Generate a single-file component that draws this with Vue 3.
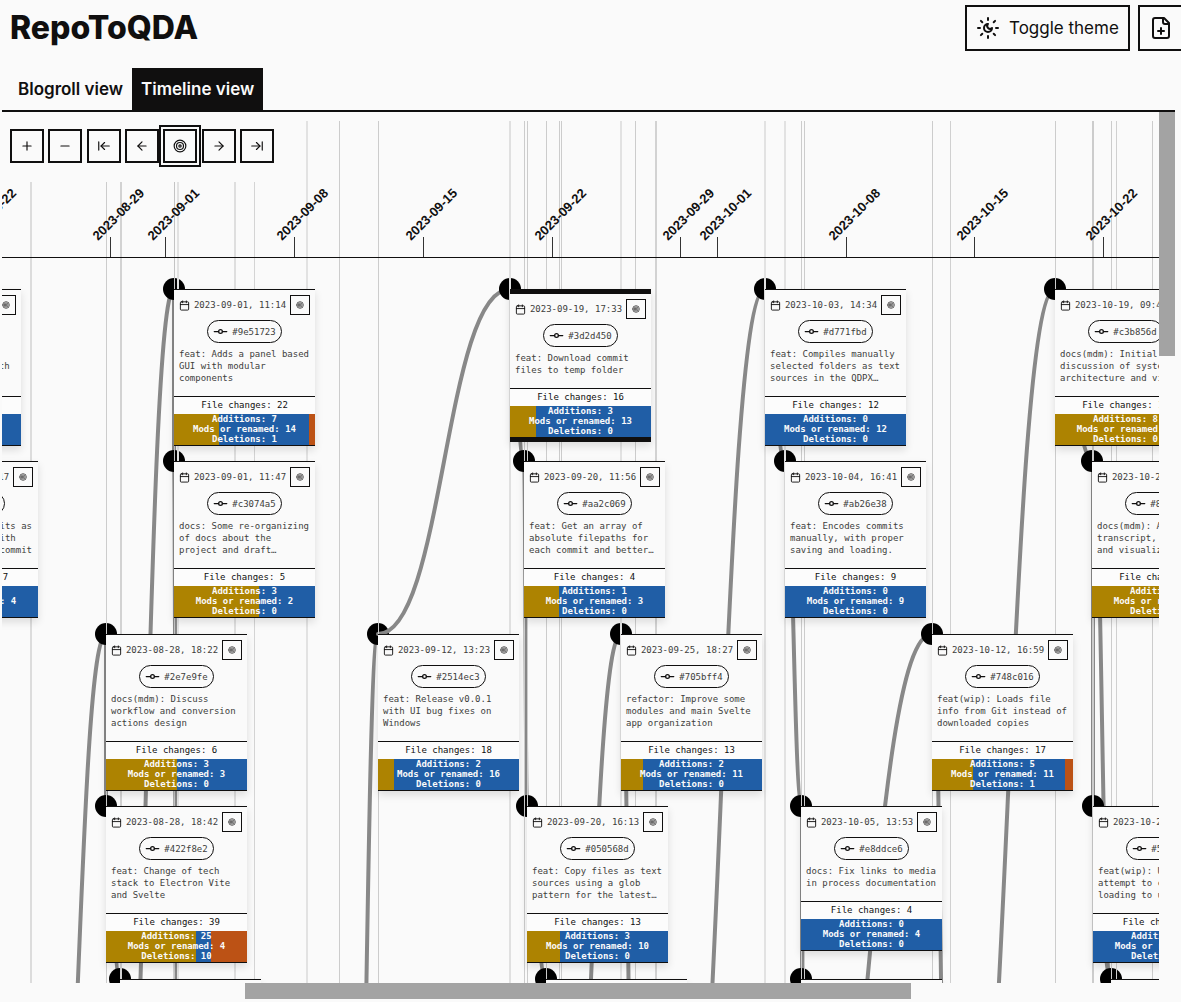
<script setup>
import { ref } from 'vue'

const icons = {
  plus: ['M5 12h14', 'M12 5v14'],
  minus: ['M5 12h14'],
  first: ['M3 19V5', 'm13 6-6 6 6 6', 'M7 12h14'],
  prev: ['m12 19-7-7 7-7', 'M19 12H5'],
  target: [
    'M2 12a10 10 0 1 0 20 0a10 10 0 1 0-20 0',
    'M6 12a6 6 0 1 0 12 0a6 6 0 1 0-12 0',
    'M10 12a2 2 0 1 0 4 0a2 2 0 1 0-4 0',
  ],
  next: ['M5 12h14', 'm12 5 7 7-7 7'],
  last: ['M17 12H3', 'm11 18 6-6-6-6', 'M21 5v14'],
}

const tools = [
  { icon: 'plus', label: 'Zoom in' },
  { icon: 'minus', label: 'Zoom out' },
  { icon: 'first', label: 'First commit' },
  { icon: 'prev', label: 'Previous commit' },
  { icon: 'target', label: 'Centre on commit' },
  { icon: 'next', label: 'Next commit' },
  { icon: 'last', label: 'Last commit' },
]

const view = ref('timeline')
const focused = ref('target')

const ticks = [
  [-18, '2023-08-22'], [110, '2023-08-29'], [165, '2023-09-01'], [294, '2023-09-08'],
  [423, '2023-09-15'], [552, '2023-09-22'], [680, '2023-09-29'], [717, '2023-10-01'],
  [846, '2023-10-08'], [974, '2023-10-15'], [1103, '2023-10-22'],
]

// [x, width, shade]
const guides = [
  [30, 2, '#dcdcdc'], [106, 1, '#cccccc'], [120, 2, '#d2d2d2'], [174, 1, '#c4c4c4'],
  [177, 2, '#e2e2e2'], [234, 2, '#dedede'], [254, 1, '#d4d4d4'], [306, 2, '#e2e2e2'],
  [339, 1, '#cccccc'], [378, 1, '#cccccc'], [509, 2, '#e0e0e0'], [524, 1, '#cccccc'],
  [527, 1, '#cccccc'], [546, 1, '#cccccc'], [559, 1, '#cccccc'], [561, 1, '#cccccc'],
  [620, 2, '#e2e2e2'], [635, 1, '#cccccc'], [655, 2, '#d2d2d2'], [764, 2, '#e2e2e2'],
  [784, 2, '#e2e2e2'], [801, 1, '#cccccc'], [804, 1, '#cccccc'], [932, 1, '#cccccc'],
  [950, 1, '#d0d0d0'], [1055, 1, '#cccccc'], [1092, 2, '#cccccc'], [1111, 1, '#cccccc'],
  [1116, 1, '#d0d0d0'], [1152, 1, '#cccccc'],
]

// [x1, y1, x2, y2]
const links = [
  [174, 289, 117, 1324], [106, 634, 50, 1324], [378, 634, 355, 1324],
  [765, 289, 676, 1324], [1055, 289, 960, 1324], [932, 634, 803, 1324],
  [621, 634, 561, 1324], [510, 289, 524, 461], [524, 461, 527, 806],
  [765, 289, 785, 461], [785, 461, 802, 806], [1055, 289, 1093, 461],
  [1093, 461, 1111, 979], [1093, 461, 1093, 806], [1093, 806, 1111, 979],
  [932, 634, 950, 1324], [621, 634, 636, 1324], [174, 289, 174, 461],
  [174, 461, 177, 1324], [106, 634, 106, 806], [106, 806, 120, 979],
  [527, 806, 546, 979], [802, 806, 802, 979],
]
const mergeLink = [510, 289, 378, 634]

function curve([x1, y1, x2, y2]) {
  const m = (x1 + x2) / 2
  return `M${x1} ${y1}C${m} ${y1} ${m} ${y2} ${x2} ${y2}`
}

const commits = [
  { x: -120, y: 289, date: '2023-08-17, 10:02', hash: '7bd10f4', msg: 'feat: Keeps the panel\nviews synchronized with\nthe repo', c: [0, 4, 0] },
  { x: -103, y: 461, date: '2023-08-18, 12:17', hash: 'b41d9e0', msg: 'feat: Exports commits as\ntext files along with\nthe metadata from commit', c: [3, 4, 0] },
  { x: 106, y: 634, date: '2023-08-28, 18:22', hash: '2e7e9fe', msg: 'docs(mdm): Discuss\nworkflow and conversion\nactions design', c: [3, 3, 0] },
  { x: 106, y: 806, date: '2023-08-28, 18:42', hash: '422f8e2', msg: 'feat: Change of tech\nstack to Electron Vite\nand Svelte', c: [25, 4, 10] },
  { x: 120, y: 979, date: '2023-08-29, 13:05', hash: '91c5a7d', msg: 'feat: Adds base layout', c: [2, 3, 0] },
  { x: 174, y: 289, date: '2023-09-01, 11:14', hash: '9e51723', msg: 'feat: Adds a panel based\nGUI with modular\ncomponents', c: [7, 14, 1] },
  { x: 174, y: 461, date: '2023-09-01, 11:47', hash: 'c3074a5', msg: 'docs: Some re-organizing\nof docs about the\nproject and draft…', c: [3, 2, 0] },
  { x: 378, y: 634, date: '2023-09-12, 13:23', hash: '2514ec3', msg: 'feat: Release v0.0.1\nwith UI bug fixes on\nWindows', c: [2, 16, 0] },
  { x: 510, y: 289, date: '2023-09-19, 17:33', hash: '3d2d450', msg: 'feat: Download commit\nfiles to temp folder', c: [3, 13, 0], active: true },
  { x: 524, y: 461, date: '2023-09-20, 11:56', hash: 'aa2c069', msg: 'feat: Get an array of\nabsolute filepaths for\neach commit and better…', c: [1, 3, 0] },
  { x: 527, y: 806, date: '2023-09-20, 16:13', hash: '050568d', msg: 'feat: Copy files as text\nsources using a glob\npattern for the latest…', c: [3, 10, 0] },
  { x: 546, y: 979, date: '2023-09-21, 17:40', hash: 'd02b6c8', msg: 'feat: Adds sources', c: [1, 4, 0] },
  { x: 621, y: 634, date: '2023-09-25, 18:27', hash: '705bff4', msg: 'refactor: Improve some\nmodules and main Svelte\napp organization', c: [2, 11, 0] },
  { x: 765, y: 289, date: '2023-10-03, 14:34', hash: 'd771fbd', msg: 'feat: Compiles manually\nselected folders as text\nsources in the QDPX…', c: [0, 12, 0] },
  { x: 785, y: 461, date: '2023-10-04, 16:41', hash: 'ab26e38', msg: 'feat: Encodes commits\nmanually, with proper\nsaving and loading.', c: [0, 9, 0] },
  { x: 801, y: 806, date: '2023-10-05, 13:53', hash: 'e8ddce6', msg: 'docs: Fix links to media\nin process documentation', c: [0, 4, 0] },
  { x: 801, y: 979, date: '2023-10-05, 16:20', hash: '6af03d1', msg: 'docs: Update readme', c: [0, 1, 0] },
  { x: 932, y: 634, date: '2023-10-12, 16:59', hash: '748c016', msg: 'feat(wip): Loads file\ninfo from Git instead of\ndownloaded copies', c: [5, 11, 1] },
  { x: 1055, y: 289, date: '2023-10-19, 09:45', hash: 'c3b856d', msg: 'docs(mdm): Initial\ndiscussion of system\narchitecture and views', c: [8, 2, 0] },
  { x: 1092, y: 461, date: '2023-10-21, 12:10', hash: '8e4b11a', msg: 'docs(mdm): Adds\ntranscript, codes\nand visualizations', c: [8, 4, 0] },
  { x: 1093, y: 806, date: '2023-10-21, 17:32', hash: '5f1d0c9', msg: 'feat(wip): User\nattempt to copy\nloading to update', c: [0, 9, 0] },
  { x: 1111, y: 979, date: '2023-10-22, 16:12', hash: 'e07c2b3', msg: 'feat: Adds loading', c: [1, 2, 0] },
]

const backNodes = commits.filter((c) => c.hash === '2514ec3')
const nodes = commits.filter((c) => c.hash !== '2514ec3')

const total = (c) => c.c[0] + c.c[1] + c.c[2]
</script>

<template>
  <div class="app">
    <header class="top">
      <h1>RepoToQDA</h1>
      <div class="actions">
        <button class="big" type="button">
          <svg class="i24" viewBox="0 0 24 24">
            <path d="M12 8a2.83 2.83 0 0 0 4 4 4 4 0 1 1-4-4M12 2v2M12 20v2m-7.1-17.1 1.4 1.4M17.7 17.7l1.4 1.4M2 12h2M20 12h2M6.3 17.7l-1.4 1.4M19.1 4.9l-1.4 1.4" />
          </svg>
          Toggle theme
        </button>
        <button class="big" type="button" aria-label="New project">
          <svg class="i24" viewBox="0 0 24 24">
            <path d="M15 2H6a2 2 0 0 0-2 2v16a2 2 0 0 0 2 2h12a2 2 0 0 0 2-2V7Z" />
            <path d="M14 2v4a2 2 0 0 0 2 2h4M9 15h6M12 18v-6" />
          </svg>
        </button>
      </div>
    </header>

    <nav class="tabs">
      <button type="button" :class="{ on: view === 'blogroll' }" @click="view = 'blogroll'">Blogroll view</button>
      <button type="button" :class="{ on: view === 'timeline' }" @click="view = 'timeline'">Timeline view</button>
    </nav>

    <main class="stage">
      <div class="viewport">
        <div class="world">
          <svg class="drawing">
            <g class="links">
              <path v-for="(l, i) in links" :key="i" :d="curve(l)" />
            </g>
            <circle v-for="c in backNodes" :key="c.hash" :cx="c.x" :cy="c.y" r="11" />
            <g class="links"><path :d="curve(mergeLink)" /></g>
            <circle v-for="c in nodes" :key="c.hash" :cx="c.x" :cy="c.y" r="11" />
            <rect v-for="g in guides" :key="g[0]" :x="g[0]" y="121" :width="g[1]" height="2000" :fill="g[2]" />
            <rect x="0" y="257" width="100%" height="1" fill="#100f0f" />
            <g v-for="t in ticks" :key="t[1]">
              <rect :x="t[0]" y="237" width="1" height="20" fill="#333333" />
              <text :transform="`translate(${t[0] - 12} 241) rotate(-45)`">{{ t[1] }}</text>
            </g>
          </svg>

          <article
            v-for="c in commits"
            :key="c.hash"
            class="card"
            :class="{ active: c.active }"
            :style="{ left: c.x + 'px', top: c.y + 'px' }"
          >
            <div class="when">
              <svg class="cal" viewBox="0 0 24 24">
                <rect x="3" y="4" width="18" height="18" rx="2" />
                <path d="M16 2v4M8 2v4M3 10h18" />
              </svg>
              <time>{{ c.date }}</time>
              <button type="button" aria-label="Focus commit">
                <svg viewBox="0 0 24 24"><path v-for="d in icons.target" :key="d" :d="d" /></svg>
              </button>
            </div>
            <a class="hash" href="#">
              <svg viewBox="0 0 24 24">
                <circle cx="12" cy="12" r="3" />
                <path d="M2 12h7M15 12h7" />
              </svg>
              #{{ c.hash }}
            </a>
            <p class="msg">{{ c.msg }}</p>
            <div class="count">File changes: {{ total(c) }}</div>
            <div class="bar">
              <i class="add" :style="{ width: (c.c[0] / total(c)) * 100 + '%' }"></i>
              <i class="mod" :style="{ width: (c.c[1] / total(c)) * 100 + '%' }"></i>
              <i class="del" :style="{ width: (c.c[2] / total(c)) * 100 + '%' }"></i>
              <div class="nums">
                <span>Additions: {{ c.c[0] }}</span>
                <span>Mods or renamed: {{ c.c[1] }}</span>
                <span>Deletions: {{ c.c[2] }}</span>
              </div>
            </div>
          </article>
        </div>

        <div class="tools">
          <button
            v-for="t in tools"
            :key="t.icon"
            type="button"
            :aria-label="t.label"
            :class="{ focus: focused === t.icon }"
            @click="focused = t.icon"
          >
            <svg viewBox="0 0 24 24"><path v-for="d in icons[t.icon]" :key="d" :d="d" /></svg>
          </button>
        </div>
      </div>
      <div class="vbar"><div></div></div>
      <div class="hbar"><div></div></div>
    </main>
  </div>
</template>

<style>
body {
  background: #fafafa;
  overflow: hidden;
}
</style>

<style scoped>
* {
  box-sizing: border-box;
}
.app {
  display: flex;
  flex-direction: column;
  height: 100vh;
  padding: 0 6px 3px 2px;
  background: #fafafa;
  color: #100f0f;
  font-family: Inter, sans-serif;
}
button {
  display: flex;
  align-items: center;
  justify-content: center;
  margin: 0;
  padding: 0;
  border: 2px solid #100f0f;
  background: #fafafa;
  color: #100f0f;
  font-family: inherit;
}
svg {
  flex: none;
  fill: none;
  stroke: #100f0f;
  stroke-width: 2;
  stroke-linecap: round;
  stroke-linejoin: round;
}
.top {
  display: flex;
  justify-content: space-between;
  height: 68px;
  padding: 5px 0 0 8px;
}
h1 {
  margin: 0;
  font-size: 32px;
  font-weight: 800;
  line-height: 46px;
}
.actions {
  display: flex;
  gap: 8px;
  width: 210px;
}
.big {
  flex: none;
  gap: 9px;
  height: 46px;
  padding: 0 9px;
  font-size: 17px;
  white-space: nowrap;
}
.i24 {
  width: 24px;
  height: 24px;
}
.tabs {
  display: flex;
  padding-left: 7px;
  border-bottom: 2px solid #100f0f;
}
.tabs button {
  height: 42px;
  padding: 0 9px;
  border: 0;
  font-size: 17px;
  font-weight: 600;
}
.tabs .on {
  background: #100f0f;
  color: #fafafa;
}
.stage {
  flex: 1;
  min-height: 0;
  display: grid;
  grid-template: minmax(0, 1fr) 16px / minmax(0, 1fr) 16px;
}
.viewport {
  position: relative;
  overflow: hidden;
}
/* The world shares its origin with the window, so timeline coordinates start at the page corner. */
.world {
  position: absolute;
  inset: -112px 0 0 -2px;
}
.drawing {
  position: absolute;
  width: 100%;
  height: 100%;
  stroke: none;
}
.drawing circle {
  fill: #000;
}
.links {
  fill: none;
  stroke: #888;
  stroke-width: 4;
}
.drawing text {
  fill: #100f0f;
  font: bold 13px "Liberation Sans", Arial, sans-serif;
}
.tools {
  position: absolute;
  top: 0;
  left: 0;
  display: flex;
  justify-content: space-between;
  width: 280px;
  height: 70px;
  padding: 17px 8px 0;
  background: #fafafa;
}
.tools button {
  width: 34px;
  height: 34px;
}
.tools svg {
  width: 14px;
  height: 14px;
}
.tools .focus {
  outline: 2px solid #100f0f;
  outline-offset: 2px;
}
.vbar div {
  height: 28%;
  background: #a3a3a3;
}
.hbar div {
  width: 666px;
  height: 16px;
  margin-left: 21%;
  background: #a3a3a3;
}
.card {
  position: absolute;
  width: 141px;
  border: solid #100f0f;
  border-width: 1px 0;
  background: #fafafa;
  box-shadow: 0 4px 8px rgba(0, 0, 0, 0.12);
  color: #403e3c;
  font: 9px/12px "DejaVu Sans Mono", monospace;
}
.card.active {
  border-width: 5px 0;
}
.when {
  display: flex;
  align-items: center;
  justify-content: space-between;
  height: 30px;
  padding: 0 5px;
}
.cal {
  width: 11px;
  height: 11px;
}
.when button {
  width: 20px;
  height: 20px;
  border-width: 1px;
}
.when button svg {
  width: 8px;
  height: 8px;
}
.hash {
  display: flex;
  align-items: center;
  justify-content: center;
  gap: 4px;
  width: 75px;
  height: 23px;
  margin: 0 auto;
  border: 1px solid #100f0f;
  border-radius: 12px;
  color: inherit;
  text-decoration: none;
}
.hash svg {
  width: 15px;
  height: 15px;
}
.msg {
  margin: 0;
  padding: 5px 5px 12px;
  white-space: pre;
}
.count {
  border-top: 1px solid #100f0f;
  background: #fcfcfc;
  color: #100f0f;
  line-height: 17px;
  text-align: center;
}
.bar {
  position: relative;
  display: flex;
  height: 31px;
}
.add {
  background: #ad8301;
}
.mod {
  background: #205ea6;
}
.del {
  background: #bc5215;
}
.nums {
  position: absolute;
  inset: 0;
  display: flex;
  flex-direction: column;
  align-items: center;
  color: #fafafa;
  font-weight: bold;
  line-height: 10px;
}
</style>
